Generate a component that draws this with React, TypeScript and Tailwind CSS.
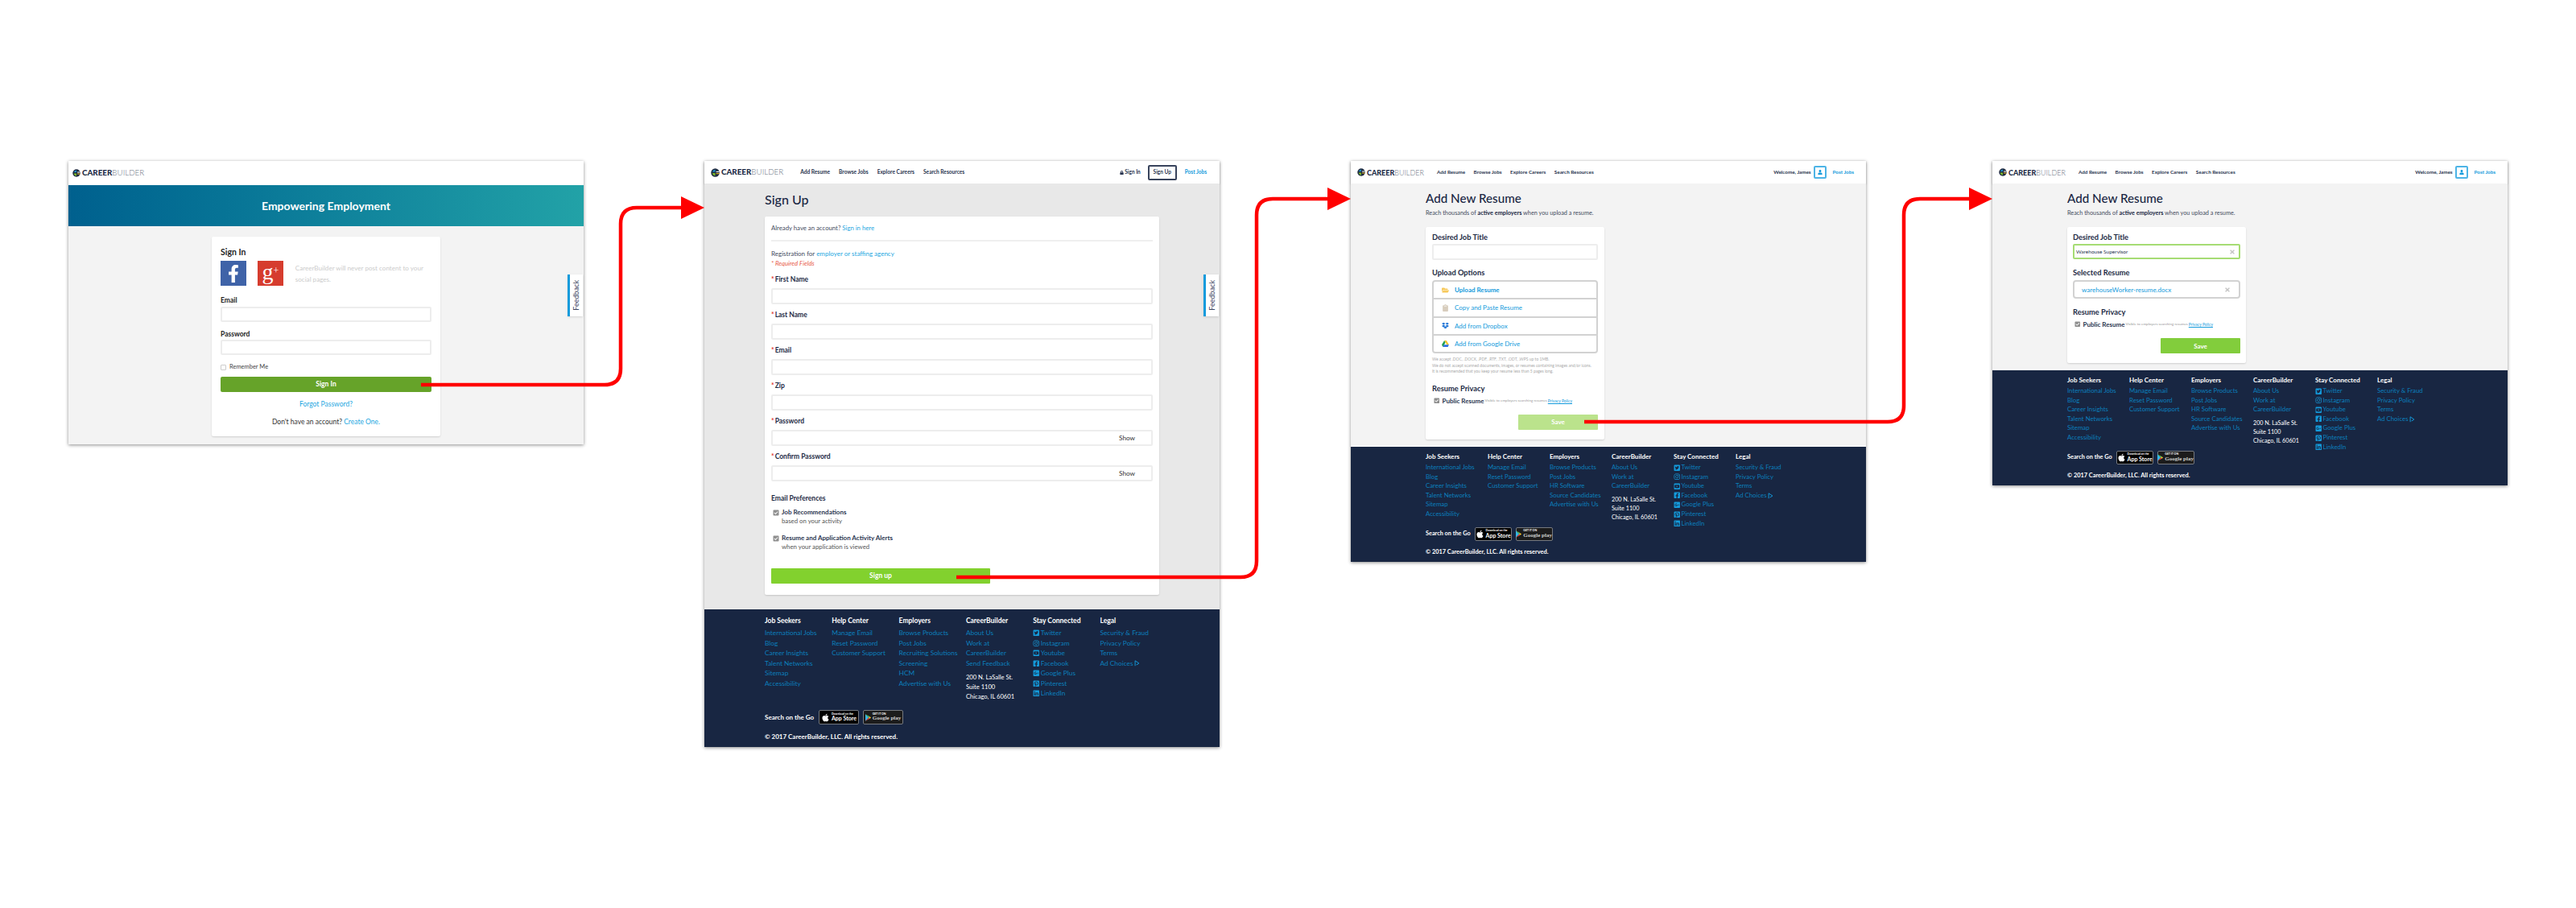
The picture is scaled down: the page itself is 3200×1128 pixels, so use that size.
import React from 'react';
import {
  FaApple,
  FaCheckSquare,
  FaClipboard,
  FaDropbox,
  FaFacebookF,
  FaFacebookSquare,
  FaFolderOpen,
  FaGooglePlusSquare,
  FaInstagram,
  FaLinkedin,
  FaLock,
  FaPinterestSquare,
  FaTimes,
  FaTwitterSquare,
  FaUser,
  FaYoutubeSquare,
} from 'react-icons/fa';

const Logo = ({ size, iconSize }: { size: string; iconSize: string }) => (
  <div className={`flex items-center gap-[2px] leading-none ${size}`}>
    <svg viewBox="0 0 20 20" className={iconSize}>
      <circle cx="10" cy="10" r="9.5" fill="#1f2b40" />
      <path d="M10 3 A7 7 0 0 0 3.5 8 H10 Z" fill="#1a8fc9" />
      <path d="M3.5 11 A7 7 0 0 0 10 17 V11 Z" fill="#7ab929" />
      <path d="M12 7 H19 V9 H12 Z" fill="#ffffff" />
      <path d="M12 11 H19 V13 H12 Z" fill="#f3b71b" />
    </svg>
    <span className="font-black text-[#1c2a44]">CAREER</span>
    <span className="-ml-[2px] font-light text-[#6d7686]">BUILDER</span>
  </div>
);

const Nav = ({ size, gap }: { size: string; gap: string }) => (
  <div className={`flex items-center font-bold text-[#2a3550] ${size} ${gap}`}>
    <span>Add Resume</span>
    <span>Browse Jobs</span>
    <span>Explore Careers</span>
    <span>Search Resources</span>
  </div>
);

const FeedbackTab = () => (
  <div className="absolute right-[1px] top-[141px] flex h-[52px] w-[19px] items-center justify-center border-l-[3px] border-[#149bdc] bg-white shadow-sm">
    <span className="rotate-180 text-[9px] text-[#3c465f] [writing-mode:vertical-rl]">Feedback</span>
  </div>
);

const Input = ({ children, className = 'h-[20px]' }: { children?: React.ReactNode; className?: string }) => (
  <div className={`flex items-center rounded-[2px] border-2 border-[#ededed] bg-white ${className}`}>{children}</div>
);

const Field = ({ label, show, className }: { label: string; show?: boolean; className: string }) => (
  <div className={className}>
    <div className="text-[8.5px] leading-[12px] font-bold text-[#1c2a44]">
      <span className="mr-[1px] text-[#e0332b]">*</span>
      {label}
    </div>
    <Input className="mt-[5px] h-[20px] justify-end pr-[20px]">
      {show && <span className="text-[8.2px] text-[#333]">Show</span>}
    </Input>
  </div>
);

const Check = ({ className = 'text-[8px]' }: { className?: string }) => (
  <FaCheckSquare className={`shrink-0 text-[#8f8f8f] ${className}`} />
);

const Social = [
  { label: 'Twitter', Icon: FaTwitterSquare },
  { label: 'Instagram', Icon: FaInstagram },
  { label: 'Youtube', Icon: FaYoutubeSquare },
  { label: 'Facebook', Icon: FaFacebookSquare },
  { label: 'Google Plus', Icon: FaGooglePlusSquare },
  { label: 'Pinterest', Icon: FaPinterestSquare },
  { label: 'LinkedIn', Icon: FaLinkedin },
];

const AppBadges = ({ box }: { box: string }) => (
  <div className="flex gap-[5px]">
    <div className={`flex items-center justify-center gap-[2px] rounded-[2px] border border-[#75797f] bg-black text-white ${box}`}>
      <FaApple className="text-[11px]" />
      <div className="flex flex-col whitespace-nowrap leading-none">
        <span className="text-[3.5px]">Download on the</span>
        <span className="text-[7px] font-bold">App Store</span>
      </div>
    </div>
    <div className={`flex items-center justify-center gap-[2px] rounded-[2px] border border-[#75797f] bg-[#1c1c1c] text-[#cfcfcf] ${box}`}>
      <svg viewBox="0 0 10 12" className="h-[9px] w-[7px] shrink-0">
        <polygon points="0,0 6,6 0,12" fill="#35b6e8" />
        <polygon points="0,0 8,4.3 6,6" fill="#5fc15a" />
        <polygon points="0,12 8,7.7 6,6" fill="#e8453c" />
        <polygon points="8,4.3 10,6 8,7.7 6,6" fill="#f7c52e" />
      </svg>
      <div className="flex flex-col whitespace-nowrap leading-none">
        <span className="text-[3.5px] text-white">GET IT ON</span>
        <span className="text-[7px] [font-family:'Liberation_Serif',serif]">Google play</span>
      </div>
    </div>
  </div>
);

const FooterList = ({ items }: { items: string[] }) => (
  <>
    {items.map((item) => (
      <div key={item}>{item}</div>
    ))}
  </>
);

const Footer = ({ wide }: { wide?: boolean }) => {
  const employers = wide
    ? ['Browse Products', 'Post Jobs', 'Recruiting Solutions', 'Screening', 'HCM', 'Advertise with Us']
    : ['Browse Products', 'Post Jobs', 'HR Software', 'Source Candidates', 'Advertise with Us'];
  const about = wide ? ['About Us', 'Work at', 'CareerBuilder', 'Send Feedback'] : ['About Us', 'Work at', 'CareerBuilder'];
  const head = `leading-[12px] font-bold whitespace-nowrap text-white ${wide ? 'text-[8.5px]' : 'text-[8px]'}`;
  const links = wide
    ? 'mt-[3px] text-[8.3px] leading-[12.5px] whitespace-nowrap text-[#0b7fbc]'
    : 'mt-[2px] text-[7.8px] leading-[11.6px] whitespace-nowrap text-[#0b7fbc]';

  return (
    <div className={`bg-[#182642] ${wide ? 'h-[171px] pl-[75px] pt-[8px]' : 'h-[143px] pl-[93px] pt-[6px]'}`}>
      <div className={`grid ${wide ? 'h-[117px] grid-cols-[repeat(6,83.3px)]' : 'h-[94px] grid-cols-[repeat(6,77px)]'}`}>
        <div>
          <div className={head}>Job Seekers</div>
          <div className={links}>
            <FooterList items={['International Jobs', 'Blog', 'Career Insights', 'Talent Networks', 'Sitemap', 'Accessibility']} />
          </div>
        </div>
        <div>
          <div className={head}>Help Center</div>
          <div className={links}>
            <FooterList items={['Manage Email', 'Reset Password', 'Customer Support']} />
          </div>
        </div>
        <div>
          <div className={head}>Employers</div>
          <div className={links}>
            <FooterList items={employers} />
          </div>
        </div>
        <div>
          <div className={head}>CareerBuilder</div>
          <div className={links}>
            <FooterList items={about} />
          </div>
          <div className={`mt-[5px] text-white ${wide ? 'text-[7.6px] leading-[12px]' : 'text-[7.2px] leading-[11px]'}`}>
            <div>200 N. LaSalle St.</div>
            <div>Suite 1100</div>
            <div>Chicago, IL 60601</div>
          </div>
        </div>
        <div>
          <div className={head}>Stay Connected</div>
          <div className={links}>
            {Social.map(({ label, Icon }) => (
              <div key={label} className="flex items-center gap-[1px]">
                <Icon className="text-[8.5px] text-[#149bdc]" />
                {label}
              </div>
            ))}
          </div>
        </div>
        <div>
          <div className={head}>Legal</div>
          <div className={links}>
            <FooterList items={['Security & Fraud', 'Privacy Policy', 'Terms']} />
            <div className="flex items-center gap-[1px]">
              Ad Choices
              <svg viewBox="0 0 8 10" className="h-[8px] w-[7px] text-[#149bdc]">
                <path d="M1 1 L7 5 L3 7.5 M1 1 V9" fill="none" stroke="currentColor" strokeWidth="1.2" />
              </svg>
            </div>
          </div>
        </div>
      </div>
      <div className={`flex items-center font-bold text-white ${wide ? 'gap-[6px] text-[8px]' : 'gap-[5px] text-[7.3px]'}`}>
        <span>Search on the Go</span>
        <AppBadges box={wide ? 'h-[18px] w-[50px]' : 'h-[17px] w-[46px]'} />
      </div>
      <div className={`leading-[12px] font-bold text-white ${wide ? 'mt-[9px] text-[8px]' : 'mt-[8px] text-[7.4px]'}`}>
        © 2017 CareerBuilder, LLC. All rights reserved.
      </div>
    </div>
  );
};

const UserHeader = () => (
  <div className="flex h-[28px] items-center justify-between bg-white pl-[8px] pr-[15px] shadow-[0_1px_2px_rgba(0,0,0,0.2)]">
    <div className="flex items-center gap-[16px]">
      <Logo size="text-[9px]" iconSize="h-[10px] w-[10px]" />
      <Nav size="text-[6.3px]" gap="gap-[10.5px]" />
    </div>
    <div className="flex items-center text-[6.3px] font-bold">
      <span className="text-[#2a3550]">Welcome, James</span>
      <span className="ml-[3px] flex h-[16px] w-[16px] items-center justify-center rounded-[2px] border-2 border-[#4db4e6]">
        <FaUser className="text-[6px] text-[#149bdc]" />
      </span>
      <span className="ml-[8px] text-[#149bdc]">Post Jobs</span>
    </div>
  </div>
);

const ResumeTitle = () => (
  <>
    <h1 className="text-[15.2px] leading-[24px] font-medium text-[#1a2744]">Add New Resume</h1>
    <p className="mt-[1px] text-[7.3px] leading-[12px] text-[#444c5e]">
      Reach thousands of <b className="text-[#1a2744]">active employers</b> when you upload a resume.
    </p>
  </>
);

const PublicResume = () => (
  <div className="mt-[2px] flex items-center whitespace-nowrap pl-[2px] leading-[12px]">
    <Check className="text-[7.5px]" />
    <span className="ml-[3px] text-[8px] font-bold text-[#2a3550]">Public Resume</span>
    <span className="ml-[1px] text-[4.5px] text-[#999]">Visible to employers searching resumes</span>
    <span className="ml-[1px] text-[5px] text-[#149bdc] underline">Privacy Policy</span>
  </div>
);

const UploadRow = ({ icon, label, strong }: { icon: React.ReactNode; label: string; strong?: boolean }) => (
  <div className={`flex flex-1 items-center border-b-2 border-[#d2d2d2] last:border-b-0 ${strong ? 'font-bold' : ''}`}>
    <div className="flex w-[26px] shrink-0 justify-center pl-[3px]">{icon}</div>
    <span className="text-[8px] text-[#149bdc]">{label}</span>
  </div>
);

const DriveIcon = () => (
  <svg viewBox="0 0 20 18" className="h-[8px] w-[9px]">
    <polygon points="7,0 13,0 20,12 14,12" fill="#f7c52e" />
    <polygon points="7,0 0,12 3,18 10,6" fill="#1f9d55" />
    <polygon points="3,18 17,18 20,12 6,12" fill="#2f6fe0" />
  </svg>
);

const App = () => (
  <div className="relative h-[1128px] w-[3200px] overflow-hidden bg-white [font-family:Lato,'Liberation_Sans',sans-serif]">
    {/* Sign in */}
    <div className="absolute left-[85px] top-[200px] flex h-[352px] w-[640px] flex-col bg-white shadow-[0_1px_4px_rgba(0,0,0,0.45)]">
      <div className="flex h-[30px] items-center pl-[5px]">
        <Logo size="text-[9.8px]" iconSize="h-[10px] w-[10px]" />
      </div>
      <div className="flex h-[51px] items-center justify-center bg-gradient-to-r from-[#00608e] to-[#22a2a7] text-[14px] font-bold text-white">
        Empowering Employment
      </div>
      <div className="flex-1 bg-[#f3f3f3] pl-[178px] pt-[13px]">
        <div className="h-[248px] w-[284px] rounded-[2px] bg-white px-[11px] pt-[12px] shadow-[0_1px_2px_rgba(0,0,0,0.15)]">
          <div className="text-[10.5px] leading-[14px] font-bold text-[#222]">Sign In</div>
          <div className="mt-[4px] flex h-[31px] items-center">
            <div className="flex h-[31px] w-[32px] items-center justify-center bg-[#3f63a8]">
              <FaFacebookF className="text-[22px] text-white" />
            </div>
            <div className="ml-[14px] flex h-[31px] w-[32px] items-center justify-center bg-[#d63c2e] text-white [font-family:'Liberation_Serif',serif]">
              <span className="mb-[4px] text-[28px] leading-none">g</span>
              <span className="mb-[8px] text-[12px] leading-none">+</span>
            </div>
            <p className="ml-[15px] w-[170px] text-[8.1px] leading-[14px] text-[#cccccc]">
              CareerBuilder will never post content to your social pages.
            </p>
          </div>
          <div className="mt-[13px] text-[8.5px] leading-[10px] font-bold text-[#222]">Email</div>
          <Input className="mt-[3px] h-[19px]" />
          <div className="mt-[10px] text-[8.5px] leading-[10px] font-bold text-[#222]">Password</div>
          <Input className="mt-[2px] h-[19px]" />
          <div className="mt-[10px] flex h-[10px] items-center">
            <span className="h-[7px] w-[7px] rounded-[1px] border border-[#ccc]" />
            <span className="ml-[4px] text-[7.5px] text-[#444]">Remember Me</span>
          </div>
          <div className="mt-[7px] flex h-[19px] items-center justify-center rounded-[2px] bg-[#66a329] text-[8.5px] font-bold text-white">
            Sign In
          </div>
          <div className="mt-[9px] text-center text-[8.5px] leading-[12px] text-[#1ea7e1]">Forgot Password?</div>
          <div className="mt-[10px] text-center text-[8.5px] leading-[12px] text-[#333]">
            Don't have an account? <span className="text-[#1ea7e1]">Create One.</span>
          </div>
        </div>
      </div>
      <FeedbackTab />
    </div>

    {/* Sign up */}
    <div className="absolute left-[875px] top-[200px] flex h-[728px] w-[640px] flex-col bg-white shadow-[0_1px_4px_rgba(0,0,0,0.45)]">
      <div className="flex h-[28px] items-center justify-between bg-white pl-[8px] pr-[16px] shadow-[0_1px_2px_rgba(0,0,0,0.2)]">
        <div className="flex items-center gap-[21px]">
          <Logo size="text-[9.8px]" iconSize="h-[11px] w-[11px]" />
          <Nav size="text-[6.6px]" gap="gap-[11px]" />
        </div>
        <div className="flex items-center text-[6.5px] font-bold text-[#2a3550]">
          <FaLock className="text-[5px]" />
          <span className="ml-[1px]">Sign In</span>
          <span className="ml-[9px] flex h-[19px] w-[36px] items-center justify-center rounded-[2px] border-2 border-[#38435c]">
            Sign Up
          </span>
          <span className="ml-[10px] text-[#149bdc]">Post Jobs</span>
        </div>
      </div>
      <div className="h-[529px] bg-[#e8e8e8] pl-[75px] pt-[8px]">
        <h1 className="text-[16px] leading-[24px] font-medium text-[#1a2744]">Sign Up</h1>
        <div className="mt-[9px] h-[470px] w-[490px] rounded-[2px] bg-white px-[8px] pt-[8px] shadow-[0_1px_2px_rgba(0,0,0,0.15)]">
          <div className="text-[7.75px] leading-[12px] text-[#444c5e]">
            Already have an account? <span className="text-[#1ea7e1]">Sign in here</span>
          </div>
          <div className="mt-[9px] h-[2px] bg-[#efefef]" />
          <div className="mt-[9px] text-[8px] leading-[12px] text-[#444c5e]">
            Registration for <span className="text-[#1ea7e1]">employer or staffing agency</span>
          </div>
          <div className="text-[7.8px] leading-[12px] text-[#e8604c] italic">* Required Fields</div>
          <Field label="First Name" className="mt-[8px]" />
          <Field label="Last Name" className="mt-[7px]" />
          <Field label="Email" className="mt-[7px]" />
          <Field label="Zip" className="mt-[7px]" />
          <Field label="Password" show className="mt-[7px]" />
          <Field label="Confirm Password" show className="mt-[7px]" />
          <div className="mt-[15px] text-[8.5px] leading-[12px] font-bold text-[#1c2a44]">Email Preferences</div>
          <div className="mt-[6px] flex items-center pl-[2px] text-[8px] leading-[11px] font-bold text-[#2a3550]">
            <Check />
            <span className="ml-[3px]">Job Recommendations</span>
          </div>
          <div className="pl-[13px] text-[7.8px] leading-[11px] text-[#555]">based on your activity</div>
          <div className="mt-[10px] flex items-center pl-[2px] text-[8px] leading-[11px] font-bold text-[#2a3550]">
            <Check />
            <span className="ml-[3px]">Resume and Application Activity Alerts</span>
          </div>
          <div className="pl-[13px] text-[7.8px] leading-[11px] text-[#555]">when your application is viewed</div>
          <div className="mt-[21px] flex h-[19px] w-[272px] items-center justify-center rounded-[1px] bg-[#82d12e] text-[8.5px] font-bold text-white">
            Sign up
          </div>
        </div>
      </div>
      <Footer wide />
      <FeedbackTab />
    </div>

    {/* Add resume, empty */}
    <div className="absolute left-[1678px] top-[200px] flex h-[498px] w-[640px] flex-col bg-white shadow-[0_1px_4px_rgba(0,0,0,0.45)]">
      <UserHeader />
      <div className="h-[325px] bg-[#f3f3f3] pl-[93px] pt-[6px]">
        <ResumeTitle />
        <div className="mt-[11px] h-[264px] w-[222px] rounded-[2px] bg-white px-[8px] pt-[6px] shadow-[0_1px_2px_rgba(0,0,0,0.15)]">
          <div className="text-[9.3px] leading-[14px] font-bold text-[#1c2a44]">Desired Job Title</div>
          <Input className="mt-[1px] h-[20px]" />
          <div className="mt-[9px] text-[9.3px] leading-[14px] font-bold text-[#1c2a44]">Upload Options</div>
          <div className="mt-[2px] flex h-[91px] flex-col rounded-[4px] border-2 border-[#d2d2d2]">
            <UploadRow strong label="Upload Resume" icon={<FaFolderOpen className="text-[9px] text-[#f7c95c]" />} />
            <UploadRow label="Copy and Paste Resume" icon={<FaClipboard className="text-[9px] text-[#d8cdbd]" />} />
            <UploadRow label="Add from Dropbox" icon={<FaDropbox className="text-[9px] text-[#1f74d6]" />} />
            <UploadRow label="Add from Google Drive" icon={<DriveIcon />} />
          </div>
          <div className="mt-[4px] text-[5px] leading-[7.5px] whitespace-nowrap text-[#aaa]">
            <div>We accept .DOC, .DOCX, .PDF, .RTF, .TXT, .ODT, .WPS up to 1MB.</div>
            <div>We do not accept scanned documents, images, or resumes containing images and/or icons.</div>
            <div>It is recommended that you keep your resume less than 5 pages long.</div>
          </div>
          <div className="mt-[10px] text-[9.3px] leading-[14px] font-bold text-[#1c2a44]">Resume Privacy</div>
          <PublicResume />
          <div className="ml-auto mt-[11px] flex h-[19px] w-[99px] items-center justify-center rounded-[1px] bg-[#bbe38c] text-[8px] font-bold text-white">
            Save
          </div>
        </div>
      </div>
      <div className="h-[2px] bg-white" />
      <Footer />
    </div>

    {/* Add resume, filled in */}
    <div className="absolute left-[2475px] top-[200px] flex h-[403px] w-[640px] flex-col bg-white shadow-[0_1px_4px_rgba(0,0,0,0.45)]">
      <UserHeader />
      <div className="h-[230px] bg-[#f3f3f3] pl-[93px] pt-[6px]">
        <ResumeTitle />
        <div className="mt-[11px] h-[169px] w-[222px] rounded-[2px] bg-white px-[7px] pt-[6px] shadow-[0_1px_2px_rgba(0,0,0,0.15)]">
          <div className="text-[9.3px] leading-[14px] font-bold text-[#1c2a44]">Desired Job Title</div>
          <div className="mt-[1px] flex h-[19px] items-center justify-between rounded-[2px] border-2 border-[#a6dc74] px-[2px] text-[6.5px] text-[#2a3550]">
            <span>Warehouse Supervisor</span>
            <FaTimes className="mr-[2px] text-[8px] text-[#c4c4c4]" />
          </div>
          <div className="mt-[10px] text-[9.3px] leading-[14px] font-bold text-[#1c2a44]">Selected Resume</div>
          <div className="mt-[2px] flex h-[23px] items-center justify-between rounded-[4px] border-2 border-[#d2d2d2] pl-[9px] pr-[10px]">
            <span className="text-[8px] text-[#149bdc]">warehouseWorker-resume.docx</span>
            <FaTimes className="text-[8px] text-[#c4c4c4]" />
          </div>
          <div className="mt-[10px] text-[9.3px] leading-[14px] font-bold text-[#1c2a44]">Resume Privacy</div>
          <PublicResume />
          <div className="ml-auto mt-[11px] flex h-[19px] w-[99px] items-center justify-center rounded-[1px] bg-[#82cd3c] text-[8px] font-bold text-white">
            Save
          </div>
        </div>
      </div>
      <div className="h-[2px] bg-white" />
      <Footer />
    </div>

    {/* Flow arrows between the screens */}
    <svg className="pointer-events-none absolute left-0 top-0 h-[1128px] w-[3200px]" viewBox="0 0 3200 1128" fill="none">
      <path d="M523 478 H751 Q771 478 771 458 V278 Q771 258 791 258 H850" stroke="#ff0000" strokeWidth="4.5" />
      <polygon points="846,244 875,258 846,272" fill="#ff0000" />
      <path d="M1188 717 H1541 Q1561 717 1561 697 V267 Q1561 247 1581 247 H1652" stroke="#ff0000" strokeWidth="4.5" />
      <polygon points="1649,233 1678,247 1649,261" fill="#ff0000" />
      <path d="M1968 524 H2345 Q2365 524 2365 504 V267 Q2365 247 2385 247 H2450" stroke="#ff0000" strokeWidth="4.5" />
      <polygon points="2446,233 2475,247 2446,261" fill="#ff0000" />
    </svg>
  </div>
);

export default App;
